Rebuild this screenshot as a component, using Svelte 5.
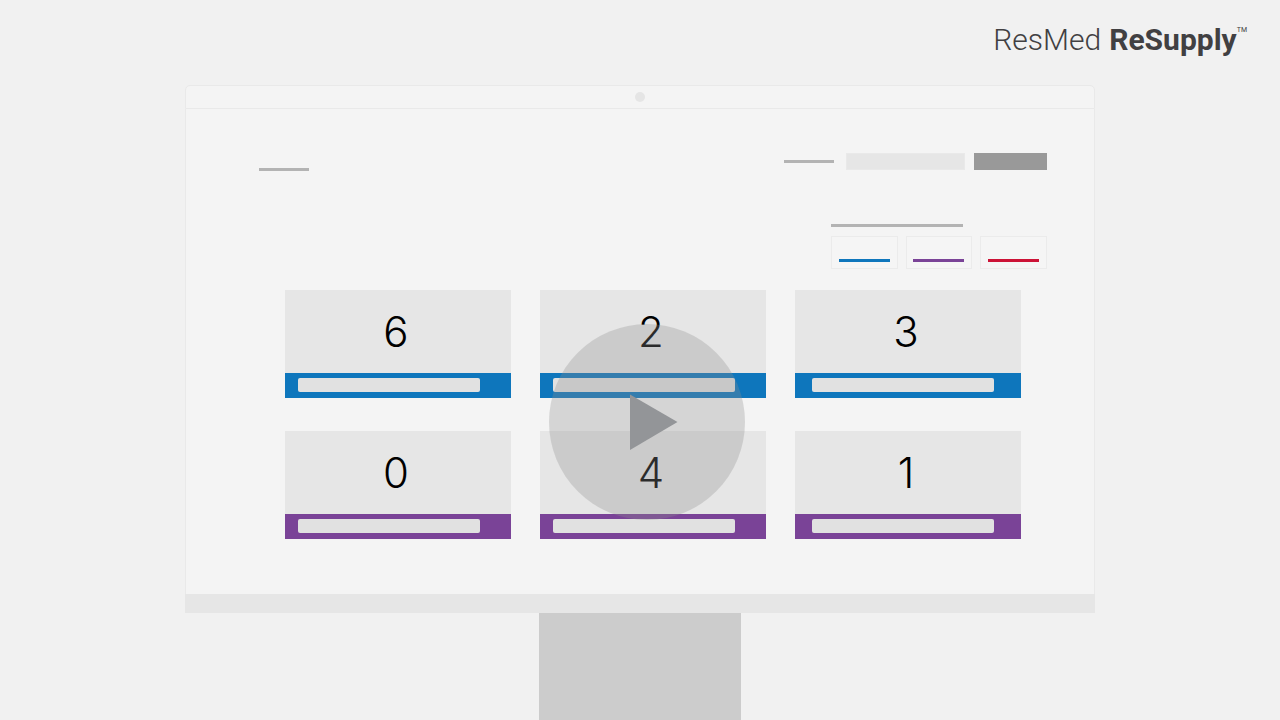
<script lang="ts">
	type Tone = "blue" | "purple" | "red";

	// The buttons in the top right corner of the dashboard
	const filters: Tone[] = ["blue", "purple", "red"];

	// One tile per count, three to a row
	const tiles: { count: number; tone: Tone }[] = [
		{ count: 6, tone: "blue" },
		{ count: 2, tone: "blue" },
		{ count: 3, tone: "blue" },
		{ count: 0, tone: "purple" },
		{ count: 4, tone: "purple" },
		{ count: 1, tone: "purple" },
	];
</script>

<div class="page">
	<header>
		<span class="light">ResMed</span>
		<span class="bold">ReSupply</span>
		<span class="mark">TM</span>
	</header>

	<main class="monitor">
		<div class="bezel">
			<span class="camera"></span>
		</div>

		<div class="screen">
			<div class="toolbar">
				<span class="line short"></span>
				<form class="search">
					<label class="line short" for="search" aria-label="Search"></label>
					<input id="search" type="text" />
					<button type="button" aria-label="Search"></button>
				</form>
			</div>

			<div class="filters">
				<div class="line long"></div>
				<div class="options">
					{#each filters as tone}
						<button type="button" aria-label="Filter {tone}">
							<span class={tone}></span>
						</button>
					{/each}
				</div>
			</div>

			<div class="tiles">
				{#each tiles as tile}
					<section class="tile">
						<div class="count">{tile.count}</div>
						<div class="strip {tile.tone}">
							<div class="name"></div>
						</div>
					</section>
				{/each}

				<button class="play" type="button" aria-label="Play">
					<svg viewBox="0 0 196 196" aria-hidden="true">
						<path d="M81 70.5 L128.5 98 L81 126 Z" fill="#939598" />
					</svg>
				</button>
			</div>
		</div>

		<div class="chin"></div>
	</main>

	<div class="stand"></div>
</div>

<style>
	:global(body) {
		background: #f1f1f1;
	}

	.page {
		min-height: 100vh;
		display: flex;
		flex-direction: column;
		align-items: center;
		font-family: Roboto, "Liberation Sans", sans-serif;
	}

	button {
		padding: 0;
		border: none;
		cursor: pointer;
	}

	header {
		align-self: stretch;
		display: flex;
		justify-content: flex-end;
		box-sizing: border-box;
		height: 85px;
		padding: 20px 33px 0 0;
		color: #414042;
		font-size: 30px;
		line-height: 40px;
	}

	.light {
		margin-right: 8px;
		font-weight: 300;
	}

	.bold {
		font-weight: 700;
	}

	.mark {
		font-size: 7px;
		line-height: 20px;
	}

	.monitor {
		box-sizing: border-box;
		width: calc(100% - 40px);
		max-width: 910px;
	}

	.bezel {
		display: flex;
		align-items: center;
		justify-content: center;
		height: 22px;
		background: #f4f4f4;
		border: 1px solid #e9e9e9;
		border-radius: 5px 5px 0 0;
	}

	.camera {
		width: 10px;
		height: 10px;
		border-radius: 50%;
		background: #e5e5e5;
	}

	.screen {
		padding: 44px 47px 55px 73px;
		background: #f4f4f4;
		border: solid #e9e9e9;
		border-width: 0 1px;
	}

	.chin {
		height: 19px;
		background: #e6e6e6;
	}

	.stand {
		flex: 1;
		width: 202px;
		background: #ccc;
	}

	.line {
		height: 3px;
		background: #b3b3b3;
	}

	.short {
		width: 50px;
	}

	.long {
		width: 132px;
	}

	.toolbar {
		display: flex;
		align-items: flex-end;
		justify-content: space-between;
		height: 18px;
	}

	.search {
		display: flex;
		align-items: center;
		align-self: flex-start;
	}

	.search input {
		box-sizing: border-box;
		width: 119px;
		height: 17px;
		margin: 0 9px 0 12px;
		padding: 0 4px;
		border: 1px solid #e9e9e9;
		background: #e6e6e6;
	}

	.search button {
		width: 73px;
		height: 17px;
		background: #999;
	}

	.filters {
		width: 216px;
		margin: 53px 0 0 auto;
	}

	.options {
		display: grid;
		grid-template-columns: repeat(3, 1fr);
		gap: 8px;
		margin-top: 9px;
	}

	.options button {
		display: flex;
		align-items: flex-end;
		justify-content: center;
		height: 33px;
		padding-bottom: 6px;
		border: 1px solid #ebebeb;
		background: #f5f5f5;
	}

	.options span {
		width: 51px;
		height: 3px;
	}

	.blue {
		background: #0e76bc;
	}

	.purple {
		background: #7a4397;
	}

	.red {
		background: #cc1236;
	}

	.tiles {
		position: relative;
		display: grid;
		grid-template-columns: repeat(3, 1fr);
		gap: 33px 29px;
		margin: 21px 26px 0;
	}

	.count {
		height: 83px;
		padding-right: 4px;
		background: #e6e6e6;
		color: #000;
		font-family: Inter, "Liberation Sans", sans-serif;
		font-size: 42px;
		font-weight: 300;
		line-height: 84px;
		text-align: center;
	}

	.strip {
		box-sizing: border-box;
		height: 25px;
		padding: 5px 31px 0 13px;
	}

	.tile:nth-child(3n) .strip {
		padding: 5px 27px 0 17px;
	}

	.name {
		height: 14px;
		border-radius: 2px;
		background: #e1e1e1;
	}

	.play {
		position: absolute;
		top: 34px;
		left: calc(50% - 104px);
		width: 196px;
		height: 196px;
		border-radius: 50%;
		background: rgba(143, 143, 143, 0.3);
	}

	.play svg {
		display: block;
		width: 100%;
	}
</style>
